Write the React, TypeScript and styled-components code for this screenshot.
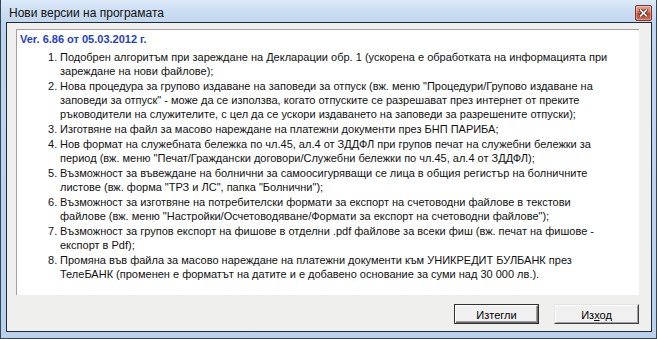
import React from "react";
import styled, { createGlobalStyle, css } from "styled-components";

const GlobalStyle = createGlobalStyle`
  html, body {
    margin: 0;
    padding: 0;
    background: #ffffff;
  }
  body {
    font-family: "Liberation Sans", Arial, sans-serif;
  }
`;

const items: string[][] = [
  [
    "Подобрен алгоритъм при зареждане на Декларации обр. 1 (ускорена е обработката на информацията при",
    "зареждане на нови файлове);",
  ],
  [
    'Нова процедура за групово издаване на заповеди за отпуск (вж. меню "Процедури/Групово издаване на',
    'заповеди за отпуск" - може да се използва, когато отпуските се разрешават през интернет от преките',
    "ръководители на служителите, с цел да се ускори издаването на заповеди за разрешените отпуски);",
  ],
  ["Изготвяне на файл за масово нареждане на платежни документи през БНП ПАРИБА;"],
  [
    "Нов формат на служебната бележка по чл.45, ал.4 от ЗДДФЛ при групов печат на служебни бележки за",
    'период (вж. меню "Печат/Граждански договори/Служебни бележки по чл.45, ал.4 от ЗДДФЛ);',
  ],
  [
    "Възможност за въвеждане на болнични за самоосигуряващи се лица в общия регистър на болничните",
    'листове (вж. форма "ТРЗ и ЛС", папка "Болнични");',
  ],
  [
    "Възможност за изготвяне на потребителски формати за експорт на счетоводни файлове в текстови",
    'файлове (вж. меню "Настройки/Осчетоводяване/Формати за експорт на счетоводни файлове");',
  ],
  [
    "Възможност за групов експорт на фишове в отделни .pdf файлове за всеки фиш (вж. печат на фишове -",
    "експорт в Pdf);",
  ],
  [
    "Промяна във файла за масово нареждане на платежни документи към УНИКРЕДИТ БУЛБАНК през",
    "ТелеБАНК (променен е форматът на датите и е добавено основание за суми над 30 000 лв.).",
  ],
];

const App: React.FC = () => {
  return (
    <>
      <GlobalStyle />
      <Window>
        <TitleBar>
          <Title>Нови версии на програмата</Title>
          <CloseButton aria-label="Затвори">
            <svg width="9" height="8" viewBox="0 0 9 8">
              <path d="M1.5 1 L7.5 7 M7.5 1 L1.5 7" stroke="#4a2a24" strokeWidth="3.4" strokeLinecap="square" />
              <path d="M1.5 1 L7.5 7 M7.5 1 L1.5 7" stroke="#ffffff" strokeWidth="1.7" strokeLinecap="square" />
            </svg>
          </CloseButton>
        </TitleBar>
        <Frame>
          <Client>
            <Memo>
              <VersionHeader>Ver. 6.86 от 05.03.2012 г.</VersionHeader>
              <List>
                {items.map((lines, i) => (
                  <Item key={i}>
                    <Num>{i + 1}.</Num>
                    <ItemText>
                      {lines.map((l, j) => (
                        <Line key={j}>{l}</Line>
                      ))}
                    </ItemText>
                  </Item>
                ))}
              </List>
            </Memo>
            <ButtonRow>
              <Button $default>Изтегли</Button>
              <Button>
                Из<u>х</u>од
              </Button>
            </ButtonRow>
          </Client>
        </Frame>
      </Window>
    </>
  );
};

export default App;

const Window = styled.div`
  width: 657px;
  height: 339px;
  box-sizing: border-box;
  display: flex;
  flex-direction: column;
  border: 1px solid #34465a;
  border-top: none;
  background: linear-gradient(#dce9f8 0px, #c9dcf2 14px, #bfd5ee 24px, #bad1ec 100%);
`;

const TitleBar = styled.div`
  height: 22px;
  flex: none;
  display: flex;
  align-items: flex-start;
  justify-content: space-between;
  padding: 0 4px 0 8px;
`;

const Title = styled.div`
  font-family: "Liberation Sans", Arial, sans-serif;
  font-size: 12px;
  line-height: 26px;
  color: #101010;
`;

const CloseButton = styled.div`
  margin-top: 5px;
  width: 17px;
  height: 16px;
  box-sizing: border-box;
  border: 1px solid #6b3a30;
  border-radius: 2px;
  background: linear-gradient(#eaa690 0%, #d9705a 45%, #c8442c 55%, #d6684c 100%);
  box-shadow: inset 0 0 0 1px rgba(255, 255, 255, 0.35);
  display: flex;
  align-items: center;
  justify-content: center;
`;

const Frame = styled.div`
  flex: 1;
  display: flex;
  padding: 0 4px 6px 5px;
`;

const Client = styled.div`
  flex: 1;
  display: flex;
  flex-direction: column;
  border: 1px solid #1f2b38;
  background: #eff0ed;
  padding: 6px 12px 7px 9px;
`;

const Memo = styled.div`
  height: 266px;
  box-sizing: border-box;
  background: #ffffff;
  border-top: 1px solid #a0a0a0;
  border-left: 1px solid #a0a0a0;
  padding: 2px 3px 0 3px;
  font-size: 11px;
  line-height: 14px;
  color: #111111;
  overflow: hidden;
`;

const VersionHeader = styled.div`
  font-weight: bold;
  color: #1e40c8;
`;

const List = styled.div`
  margin-top: 4px;
  padding-left: 28px;
  display: flex;
  flex-direction: column;
  gap: 1px;
`;

const Item = styled.div`
  display: flex;
`;

const Num = styled.div`
  width: 12px;
  flex: none;
`;

const ItemText = styled.div`
  display: flex;
  flex-direction: column;
`;

const Line = styled.div`
  white-space: nowrap;
`;

const ButtonRow = styled.div`
  margin-top: 9px;
  display: flex;
  justify-content: flex-end;
  gap: 15px;
`;

const Button = styled.button<{ $default?: boolean }>`
  width: 85px;
  height: 20px;
  box-sizing: border-box;
  padding: 2px 0 0 0;
  font-family: "Liberation Sans", Arial, sans-serif;
  font-size: 11px;
  color: #000000;
  background: #f0f0f0;
  border: 1px solid;
  border-color: #e3e3e3 #404040 #404040 #e3e3e3;
  box-shadow: inset 1px 1px 0 #ffffff, inset -1px -1px 0 #a0a0a0;
  u {
    text-decoration: underline;
  }
  ${(p) =>
    p.$default &&
    css`
      border-color: #303030;
      box-shadow: inset 1px 1px 0 #ffffff, inset -1px -1px 0 #696969, inset -2px -2px 0 #a0a0a0;
    `}
`;
